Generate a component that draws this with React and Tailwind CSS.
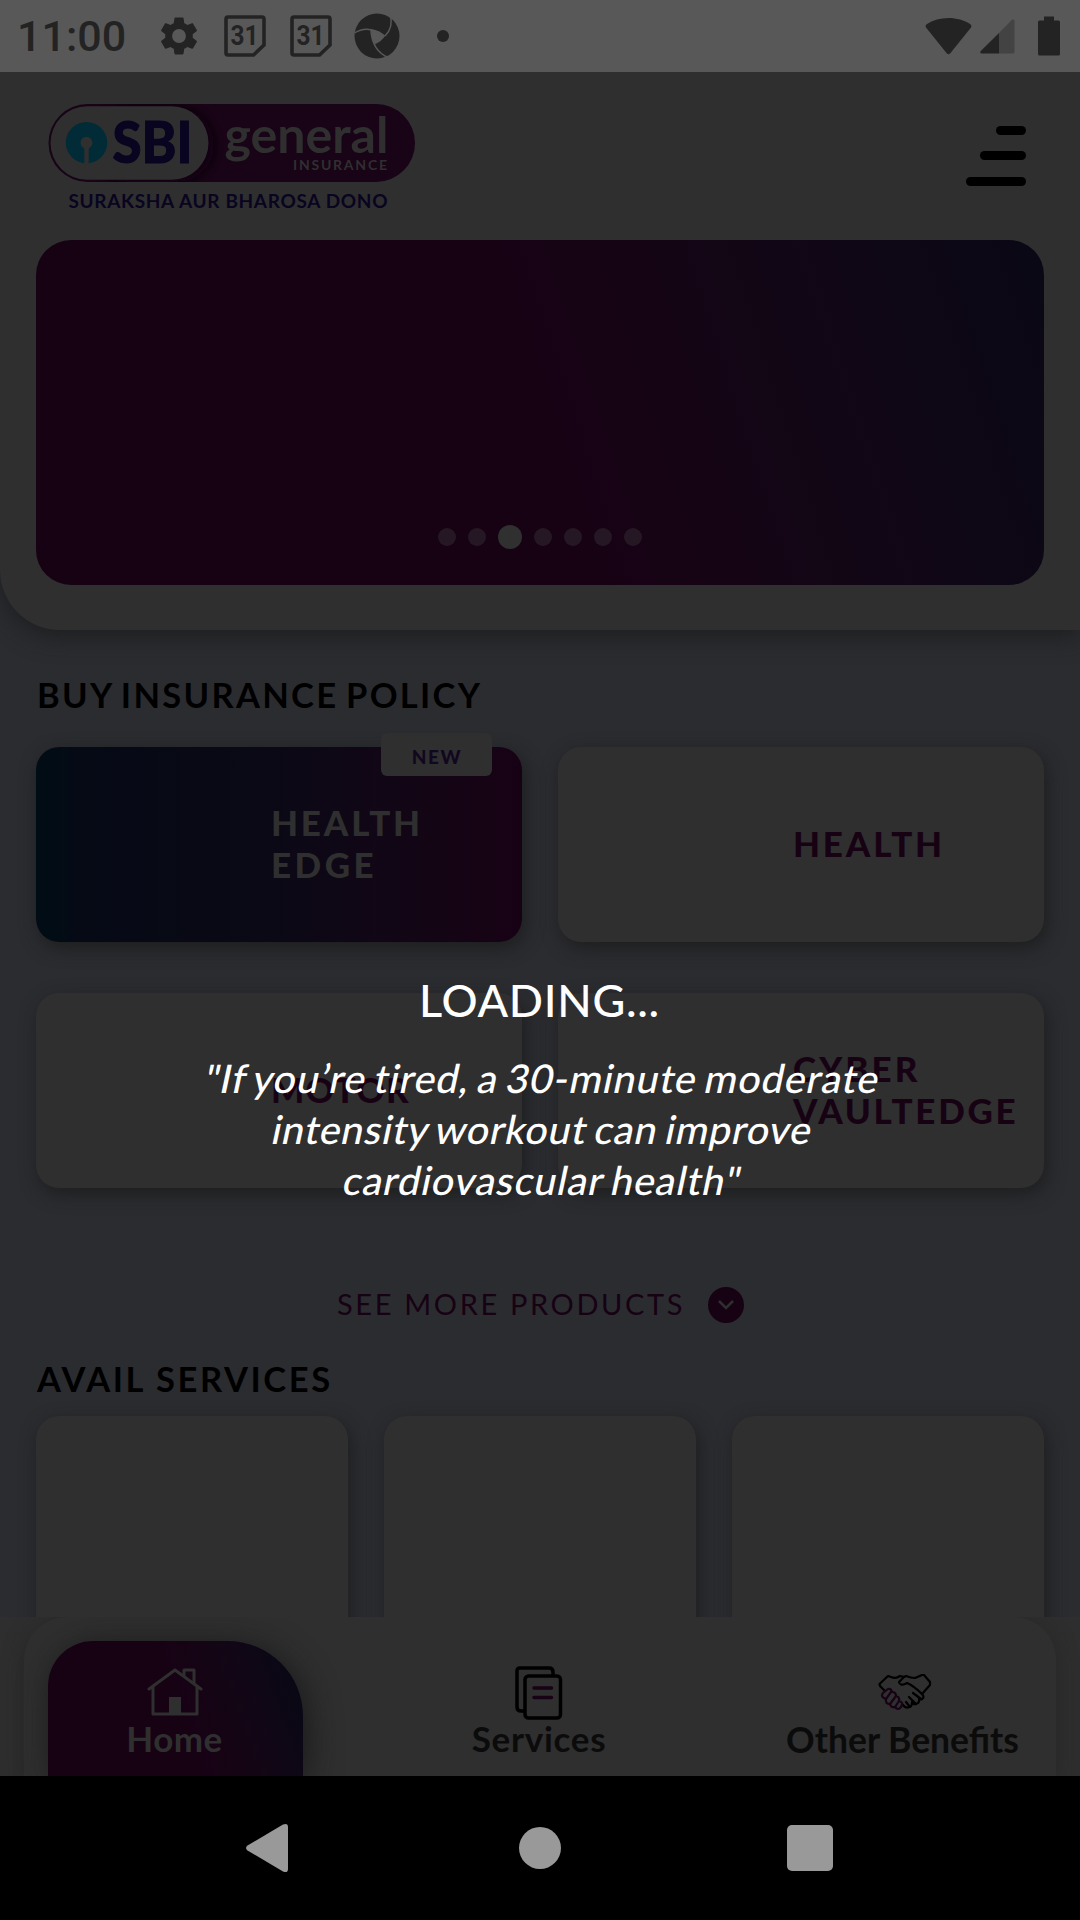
import React from "react";

const brand = "font-['Lato','Noto_Sans',sans-serif]";

function StatusBar() {
  return (
    <div className="flex h-[72px] w-full shrink-0 items-center bg-[#585858] text-[#232323]">
      <span className="ml-[17px] w-[110px] font-['Roboto',sans-serif] text-[43px] leading-[72px] font-medium">11:00</span>
      <svg className="ml-[29px] h-[46px] w-[46px]" viewBox="0 0 24 24" fill="currentColor">
        <path d="M19.14 12.94c.04-.3.06-.61.06-.94 0-.32-.02-.64-.07-.94l2.03-1.58c.18-.14.23-.41.12-.61l-1.92-3.32c-.12-.22-.37-.29-.59-.22l-2.39.96c-.5-.38-1.03-.7-1.62-.94l-.36-2.54c-.04-.24-.24-.41-.48-.41h-3.84c-.24 0-.43.17-.47.41l-.36 2.54c-.59.24-1.13.57-1.62.94l-2.39-.96c-.22-.08-.47 0-.59.22L2.74 8.87c-.12.21-.08.47.12.61l2.03 1.58c-.05.3-.09.63-.09.94s.02.64.07.94l-2.03 1.58c-.18.14-.23.41-.12.61l1.92 3.32c.12.22.37.29.59.22l2.39-.96c.5.38 1.03.7 1.62.94l.36 2.54c.05.24.24.41.48.41h3.84c.24 0 .44-.17.47-.41l.36-2.54c.59-.24 1.13-.56 1.62-.94l2.39.96c.22.08.47 0 .59-.22l1.92-3.32c.12-.22.07-.47-.12-.61l-2.01-1.58zM12 15.6A3.6 3.6 0 1 1 12 8.4a3.6 3.6 0 0 1 0 7.2z" />
      </svg>
      <Calendar className="ml-[22px]" />
      <Calendar className="ml-[24px]" />
      <svg className="ml-[22px] h-[46px] w-[46px]" viewBox="0 0 46 46">
        <circle cx="23" cy="23" r="22.500" fill="currentColor" />
        <path d="M17 16.500Q25 16.500 31 23Q28 28 21 31.300Q16 25 17 16.500Z" fill="#585858" />
        <g fill="none" stroke="#585858" strokeWidth="1.500">
          <path d="M0.500 20Q14 11 31 23" />
          <path d="M36 1Q40 14 31 23" />
          <path d="M35 45Q18 38 17 17" />
        </g>
      </svg>
      <span className="ml-[37px] h-3 w-3 rounded-full bg-[#232323]" />
      <div className="ml-auto flex items-center">
        <svg className="h-[38px] w-[47px]" viewBox="0 0 47 38" fill="currentColor">
          <path d="M1 10.5Q0 8.5 1.6 7.3C14-1 33-1 45.4 7.3Q47 8.5 46 10.5L25.3 36.3Q23.5 38.3 21.7 36.3Z" />
        </svg>
        <svg className="ml-[8px] h-[35px] w-[35px]" viewBox="0 0 35 35">
          <path d="M32 .8Q34.5-.4 34.5 2V33Q34.5 34.5 33 34.5H19V14Z" fill="#434343" />
          <path d="M19 14V34.5H2Q-.8 34.5 .8 32Z" fill="currentColor" />
        </svg>
        <svg className="mr-5 ml-[23px] h-10 w-[22px]" viewBox="0 0 22 40" fill="currentColor">
          <path d="M6 0.5H16V4.500H20.500Q22 4.500 22 6V38Q22 39.500 20.500 39.500H1.500Q0 39.500 0 38V6Q0 4.500 1.500 4.500H6Z" />
        </svg>
      </div>
    </div>
  );
}

function Calendar({ className }) {
  return (
    <svg className={`h-[42px] w-[42px] ${className}`} viewBox="0 0 42 42">
      <path d="M4 2H38Q40 2 40 4V30L29.500 40H4Q2 40 2 38V4Q2 2 4 2Z" fill="none" stroke="currentColor" strokeWidth="3.600" />
      <text x="20.500" y="30" textAnchor="middle" fontFamily="Roboto" fontSize="27" fontWeight="700" fill="currentColor" textLength="28" lengthAdjust="spacingAndGlyphs">31</text>
    </svg>
  );
}

function Logo() {
  return (
    <svg className="h-[120px] w-[372px]" viewBox="46 100 372 120">
      <defs>
        <filter id="pillShadow" x="-20%" y="-20%" width="150%" height="140%">
          <feGaussianBlur stdDeviation="6" />
        </filter>
        <clipPath id="pillClip"><rect x="48.500" y="104" width="366.500" height="78" rx="39" /></clipPath>
      </defs>
      <rect x="48.500" y="104" width="366.500" height="78" rx="39" fill="#190317" />
      <g clipPath="url(#pillClip)">
        <rect x="90" y="108" width="124" height="74" rx="37" fill="#080008" filter="url(#pillShadow)" />
      </g>
      <rect x="50.500" y="106.300" width="158" height="73.400" rx="36.700" fill="#2f2f2f" />
      <circle cx="86.500" cy="142.700" r="20.700" fill="#012b36" />
      <circle cx="86.500" cy="142.700" r="6" fill="#2f2f2f" />
      <rect x="84.300" y="144" width="4.400" height="20" fill="#2f2f2f" />
      <text x="112.500" y="163" fontFamily="Lato" fontSize="57" fontWeight="900" textLength="80" lengthAdjust="spacingAndGlyphs" fill="#090420" stroke="#090420" strokeWidth="1">SBI</text>
      <text x="224.500" y="153" fontFamily="Lato" fontSize="49" fontWeight="700" textLength="164" lengthAdjust="spacingAndGlyphs" fill="#2f2f2f">general</text>
      <text x="293" y="170" fontFamily="Lato" fontSize="14" fontWeight="700" textLength="94" fill="#2f2f2f">INSURANCE</text>
      <text x="68.500" y="208" fontFamily="Lato" fontSize="19" fontWeight="700" textLength="319" fill="#090420">SURAKSHA AUR BHAROSA DONO</text>
    </svg>
  );
}

function Header() {
  return (
    <header className="h-[558px] w-full shrink-0 rounded-bl-[60px] bg-[#2f2f2f] px-9 shadow-[0_6px_24px_rgba(24,26,26,0.8)]">
      <div className="flex h-[168px] items-start justify-between">
        <div className="mt-7 ml-[10px]"><Logo /></div>
        <div className="mt-[54px] mr-[18px] flex flex-col items-end">
          <span className="h-[9px] w-[30px] rounded-full bg-black" />
          <span className="mt-4 h-[9px] w-[46px] rounded-full bg-black" />
          <span className="mt-[17px] h-[9px] w-[60px] rounded-full bg-black" />
        </div>
      </div>
      <div className="flex h-[345px] items-end justify-center rounded-[35px] bg-[linear-gradient(72deg,#170214_51%,#130615_70%,#0f0715_84%,#0a0815_100%)] pb-9">
        <div className="flex items-center gap-3">
          {[0, 1, 2, 3, 4, 5, 6].map((i) => (
            <span key={i} className={i === 2 ? "h-6 w-6 rounded-full bg-[#2f302f]" : "h-[18px] w-[18px] rounded-full bg-[#251824]"} />
          ))}
        </div>
      </div>
    </header>
  );
}

const cardShadow = "shadow-[3px_6px_18px_rgba(24,26,26,0.75)]";

function PolicyCard({ lines, edge }) {
  return (
    <div className={`relative flex h-[195px] items-center rounded-[23px] pb-1 pl-[235px] text-[35px] leading-[42px] font-black ${cardShadow} ${edge ? "bg-[linear-gradient(90deg,#020c14_0%,#030c15_5%,#050a15_8%,#0a0915_45%,#120615_75%,#170214_100%)] text-[#2f2f2f]" : "bg-[#2f2f2f] text-[#170214]"}`}>
      <div>{lines.map(([word, tracking]) => <div key={word} className={tracking}>{word}</div>)}</div>
      {edge && (
        <span className="absolute top-[-14px] right-[30px] h-[43px] w-[111px] rounded-[6px] bg-[#2f2f2f] pl-px text-center text-[19px] leading-[48px] font-black tracking-[1.6px] text-[#110820]">NEW</span>
      )}
    </div>
  );
}

function Home() {
  return (
    <svg className="h-[50px] w-[56px]" viewBox="0 0 56 50" fill="none" stroke="#2f2f2f" strokeWidth="3" strokeLinecap="round" strokeLinejoin="round">
      <path d="M2 22L28 3L54 22M6 20V47H50V20" />
      <path d="M37 8V3H47V16" />
      <rect x="22" y="30" width="12" height="17" fill="#2f2f2f" stroke="none" />
    </svg>
  );
}

function Docs() {
  return (
    <svg className="h-[54px] w-[48px]" viewBox="0 0 48 54" fill="none" stroke="#000" strokeWidth="3.500">
      <path d="M9 45H6Q2 45 2 41V5Q2 2 5 2H34Q38 2 38 6V10" />
      <rect x="10" y="10" width="35.500" height="42" rx="3.500" />
      <path d="M19 22H36.500M19 31.500H36.500" stroke="#180216" strokeLinecap="round" />
    </svg>
  );
}

function Handshake() {
  return (
    <svg className="h-[37px] w-[54px]" viewBox="0 0 54 37" fill="none" stroke="#000" strokeWidth="2.200" strokeLinejoin="round" strokeLinecap="round">
      <path d="M7 17L2 12L1.500 10L10 2L13 3Q18 5 22 2L26 3L28 2Q33 4 37 4L44 1L46 1L52 8V11L44 20" />
      <path d="M26 3L21 8Q22 12 27 10L29 9Q36 12 44 20Q47 23 44 25Q42 26 41 24Q42 29 38 30Q36 31 34 28Q34 33 31 33Q28 35 24 30" />
      <path d="M35 19L43 25M31 23L38 30M28 28L32 33" />
      <g stroke="#180216">
        <path d="M10 15Q13 14 14 18Q18 18 18 22Q22 23 21 27Q26 28 23 33Q20 37 17 33Q13 34 12 30Q7 30 8 25Q2 23 5 19Z" />
        <path d="M8 25L13 18M12 30L18 22M17 33L21 27" />
      </g>
    </svg>
  );
}

function TabBar() {
  return (
    <nav className="relative h-[159px] w-full shrink-0 overflow-hidden bg-[#2e2e2e] px-6">
      <div className="flex h-full rounded-t-[42px] bg-[#2f2f2f] px-6 shadow-[0_4px_20px_rgba(32,32,32,0.5)]">
        <div className="mt-6 flex w-[255px] shrink-0 flex-col items-center rounded-tl-[45px] rounded-tr-[75px] bg-[linear-gradient(70deg,#170214_52%,#120615_74%,#0a0815_92%)] pt-[26px] pr-[2px] text-[#2f2f2f] shadow-[4px_4px_32px_rgba(20,20,20,0.8)]">
          <Home />
          <span className="text-[35px] leading-[42px] font-bold tracking-[0.5px]">Home</span>
        </div>
        <div className="ml-[101px] flex w-[270px] shrink-0 flex-col items-center pt-[49px] text-[#0b0b0b]">
          <Docs />
          <span className="mt-[-3px] text-[35px] leading-[42px] font-bold tracking-[0.7px]">Services</span>
        </div>
        <div className="ml-[86px] flex w-[285px] shrink-0 flex-col items-center pt-[57px] text-[#0b0b0b]">
          <div className="pl-1"><Handshake /></div>
          <span className="mt-[8px] text-[35.500px] leading-[42px] font-bold whitespace-nowrap">Other Benefits</span>
        </div>
      </div>
    </nav>
  );
}

function SystemNav() {
  return (
    <div className="flex h-36 w-full shrink-0 items-center bg-black pl-[245px]">
      <svg className="h-[50px] w-[44px]" viewBox="0 0 44 50"><path d="M2.500 22.500L38 1.500Q43 -.5 43 4V46Q43 50.500 38 48.500L2.500 27.500Q-.5 25 2.500 22.500Z" fill="#999" /></svg>
      <span className="ml-[230px] h-[42px] w-[42px] rounded-full bg-[#999]" />
      <span className="ml-[226px] h-[46px] w-[46px] rounded-[5px] bg-[#999]" />
    </div>
  );
}

export default function App() {
  return (
    <div className={`relative flex h-[1920px] w-[1080px] flex-col overflow-hidden bg-[#2b2c30] ${brand}`}>
      <StatusBar />
      <main className="flex h-[1545px] shrink-0 flex-col overflow-hidden">
        <Header />
        <h2 className="mt-[44px] ml-[37px] h-[42px] text-[34.500px] leading-[42px] font-bold tracking-[2.300px] [word-spacing:-3px] text-black">BUY INSURANCE POLICY</h2>
        <section className="mt-[31px] grid grid-cols-2 gap-x-9 gap-y-[51px] px-9">
          <PolicyCard lines={[["HEALTH", "tracking-[2.8px]"], ["EDGE", "tracking-[3.5px]"]]} edge />
          <PolicyCard lines={[["HEALTH", "tracking-[2.8px]"]]} />
          <PolicyCard lines={[["MOTOR", "tracking-[1.3px]"]]} />
          <PolicyCard lines={[["CYBER", "tracking-[3.1px]"], ["VAULTEDGE", "tracking-[2.7px]"]]} />
        </section>
        <div className="mt-[99px] ml-[337px] flex h-9 items-center text-[#170214]">
          <span className="mt-[-2px] w-[371px] text-[29px] leading-9 tracking-[2.640px]">SEE MORE PRODUCTS</span>
          <span className="flex h-9 w-9 items-center justify-center rounded-full bg-[#170214]">
            <svg className="h-[10px] w-4" viewBox="0 0 16 10" fill="none" stroke="#2f2f2f" strokeWidth="2.500"><path d="M1 1L8 8L15 1" /></svg>
          </span>
        </div>
        <h2 className="mt-[35px] ml-[37px] h-[42px] text-[34.500px] leading-[42px] font-bold tracking-[2.600px] text-black">AVAIL SERVICES</h2>
        <section className="mt-4 grid grid-cols-3 gap-9 px-9">
          {[0, 1, 2].map((i) => <div key={i} className={`h-[240px] rounded-[23px] bg-[#2f2f2f] ${cardShadow}`} />)}
        </section>
      </main>
      <TabBar />
      <SystemNav />
      <div className="absolute inset-x-0 top-[973px] text-center text-white">
        <div className="pr-[1px] text-[45px] leading-[54px] font-medium tracking-[0.7px]">LOADING...</div>
        <div className="mt-[25px] pl-[6px] text-[39.500px] leading-[51px] font-medium whitespace-nowrap [word-spacing:-3px]">
          <p className="-skew-x-12 tracking-[0.950px]">"If you’re tired, a 30-minute moderate</p>
          <p className="-skew-x-12 tracking-[0.800px]">intensity workout can improve</p>
          <p className="-skew-x-12 tracking-[0.950px]">cardiovascular health"</p>
        </div>
      </div>
    </div>
  );
}
